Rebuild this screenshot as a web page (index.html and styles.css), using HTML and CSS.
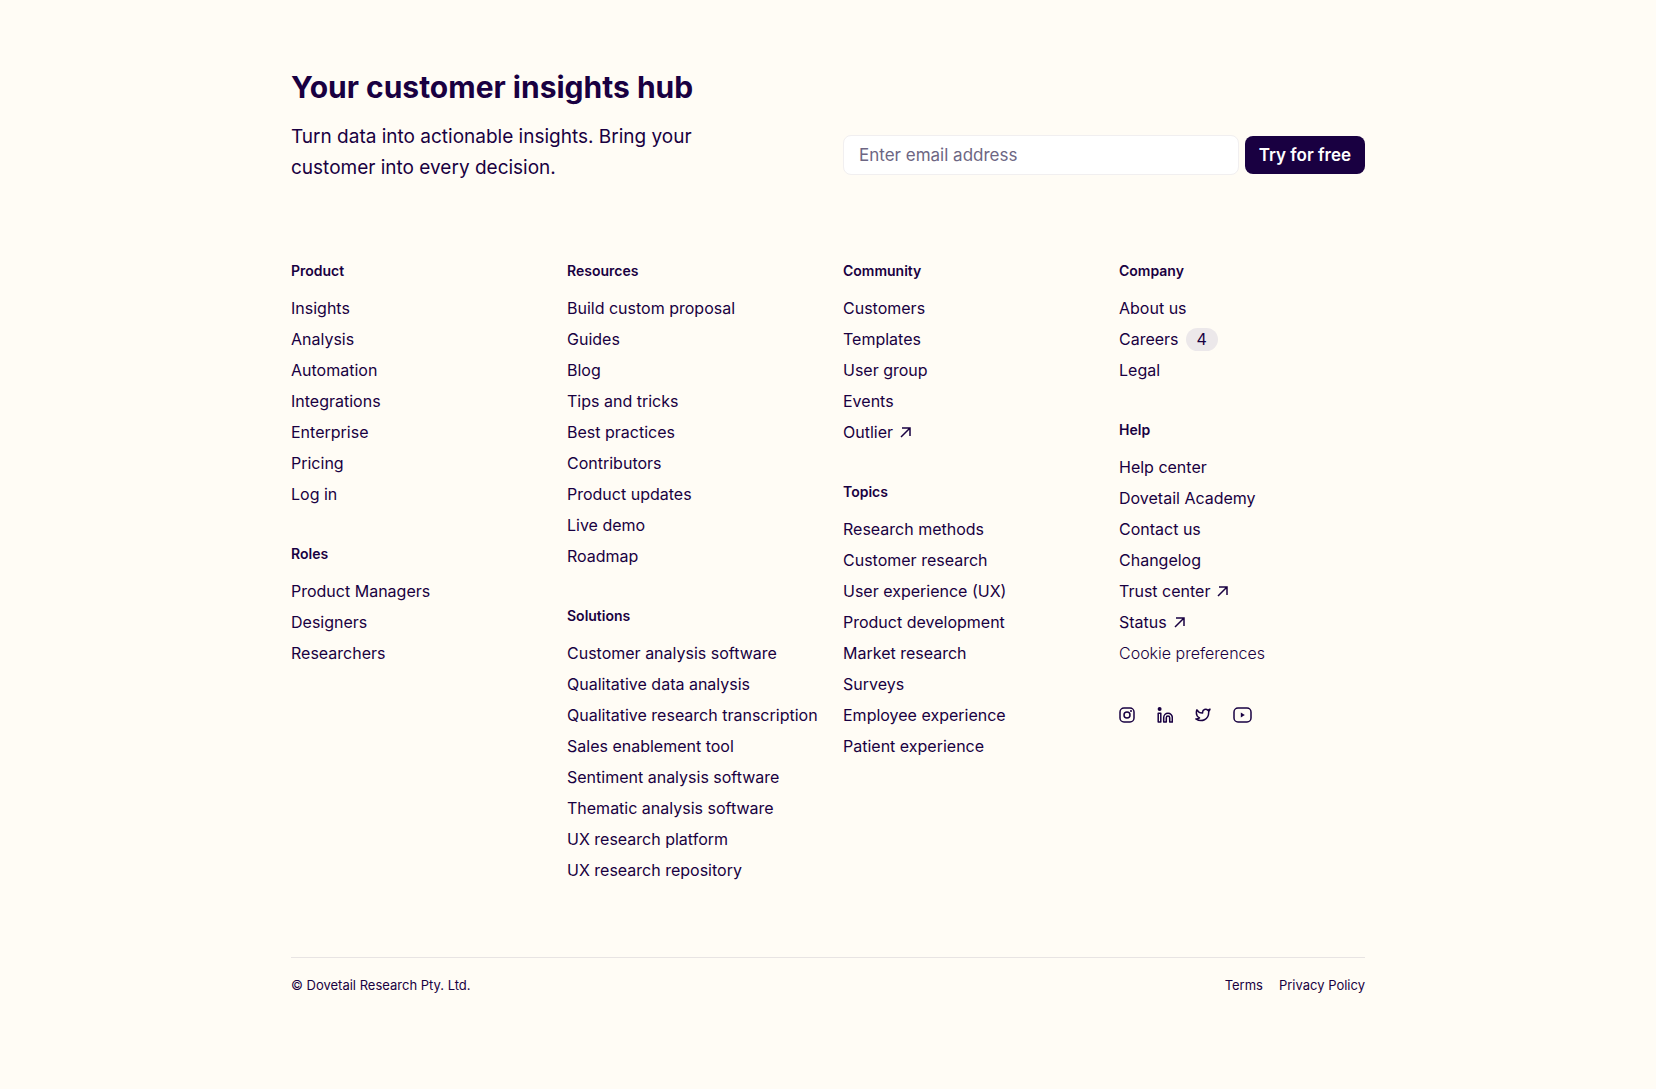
FILE: index.html
```
<!DOCTYPE html>
<html lang="en">

<head>
  <meta charset="UTF-8">
  <meta name="viewport" content="width=device-width, initial-scale=1.0">
  <title>Dovetail</title>
  <link rel="stylesheet" href="styles.css">
</head>

<body>
  <footer class="footer">
    <div class="signup">
      <div class="intro">
        <h2>Your customer insights hub</h2>
        <p>Turn data into actionable insights. Bring your customer into every decision.</p>
      </div>
      <form class="signup-form">
        <input type="email" name="email" placeholder="Enter email address" aria-label="Email address">
        <button type="submit">Try for free</button>
      </form>
    </div>

    <nav class="columns">
      <div class="column">
        <section>
          <h3>Product</h3>
          <ul>
            <li><a href="#">Insights</a></li>
            <li><a href="#">Analysis</a></li>
            <li><a href="#">Automation</a></li>
            <li><a href="#">Integrations</a></li>
            <li><a href="#">Enterprise</a></li>
            <li><a href="#">Pricing</a></li>
            <li><a href="#">Log in</a></li>
          </ul>
        </section>
        <section>
          <h3>Roles</h3>
          <ul>
            <li><a href="#">Product Managers</a></li>
            <li><a href="#">Designers</a></li>
            <li><a href="#">Researchers</a></li>
          </ul>
        </section>
      </div>

      <div class="column">
        <section>
          <h3>Resources</h3>
          <ul>
            <li><a href="#">Build custom proposal</a></li>
            <li><a href="#">Guides</a></li>
            <li><a href="#">Blog</a></li>
            <li><a href="#">Tips and tricks</a></li>
            <li><a href="#">Best practices</a></li>
            <li><a href="#">Contributors</a></li>
            <li><a href="#">Product updates</a></li>
            <li><a href="#">Live demo</a></li>
            <li><a href="#">Roadmap</a></li>
          </ul>
        </section>
        <section>
          <h3>Solutions</h3>
          <ul>
            <li><a href="#">Customer analysis software</a></li>
            <li><a href="#">Qualitative data analysis</a></li>
            <li><a href="#">Qualitative research transcription</a></li>
            <li><a href="#">Sales enablement tool</a></li>
            <li><a href="#">Sentiment analysis software</a></li>
            <li><a href="#">Thematic analysis software</a></li>
            <li><a href="#">UX research platform</a></li>
            <li><a href="#">UX research repository</a></li>
          </ul>
        </section>
      </div>

      <div class="column">
        <section>
          <h3>Community</h3>
          <ul>
            <li><a href="#">Customers</a></li>
            <li><a href="#">Templates</a></li>
            <li><a href="#">User group</a></li>
            <li><a href="#">Events</a></li>
            <li><a href="#">Outlier <svg class="arrow" viewBox="0 0 11 11"><path d="M1 10L10 1M2 1h8v8" /></svg></a></li>
          </ul>
        </section>
        <section>
          <h3>Topics</h3>
          <ul>
            <li><a href="#">Research methods</a></li>
            <li><a href="#">Customer research</a></li>
            <li><a href="#">User experience (UX)</a></li>
            <li><a href="#">Product development</a></li>
            <li><a href="#">Market research</a></li>
            <li><a href="#">Surveys</a></li>
            <li><a href="#">Employee experience</a></li>
            <li><a href="#">Patient experience</a></li>
          </ul>
        </section>
      </div>

      <div class="column">
        <section>
          <h3>Company</h3>
          <ul>
            <li><a href="#">About us</a></li>
            <li><a href="#">Careers <span class="badge">4</span></a></li>
            <li><a href="#">Legal</a></li>
          </ul>
        </section>
        <section>
          <h3>Help</h3>
          <ul>
            <li><a href="#">Help center</a></li>
            <li><a href="#">Dovetail Academy</a></li>
            <li><a href="#">Contact us</a></li>
            <li><a href="#">Changelog</a></li>
            <li><a href="#">Trust center <svg class="arrow" viewBox="0 0 11 11"><path d="M1 10L10 1M2 1h8v8" /></svg></a></li>
            <li><a href="#">Status <svg class="arrow" viewBox="0 0 11 11"><path d="M1 10L10 1M2 1h8v8" /></svg></a></li>
            <li><button type="button" class="cookie">Cookie preferences</button></li>
          </ul>
        </section>
        <div class="social">
          <a href="#" aria-label="Instagram">
            <svg width="16" height="16" viewBox="0 0 16 16">
              <rect x="1" y="1" width="14" height="14" rx="4" />
              <circle cx="8" cy="8" r="3" />
              <circle class="solid" cx="12" cy="4" r="1" />
            </svg>
          </a>
          <a href="#" aria-label="LinkedIn">
            <svg width="16" height="16" viewBox="0 0 16 16">
              <circle class="solid" cx="2.6" cy="2" r="2" />
              <path d="M1.2 6.2h2.6v8.9H1.2z" />
              <path d="M6.7 15.1v-4.6a4.3 4.3 0 0 1 8.6 0v4.6h-2.6v-4.4a1.7 1.7 0 0 0-3.4 0v4.4z" />
            </svg>
          </a>
          <a href="#" aria-label="Twitter">
            <svg width="16" height="16" viewBox="0 0 16 16">
              <path d="M15 2.2c-.7.5-1.4.8-2.2 1a3 3 0 0 0-5.2 2v.8C5.2 6.1 3.2 5 1.9 2.8c0 0-2.3 5.6 2.6 8-1.1.8-2.4 1.2-3.7 1.1 6 3.9 12.9.5 12.9-6.7 0-.2 0-.4-.1-.6.7-.7 1.2-1.500 1.400-2.400z" />
            </svg>
          </a>
          <a href="#" aria-label="YouTube">
            <svg width="19" height="16" viewBox="0 0 19 16">
              <rect x="1" y="1" width="17" height="14" rx="4" />
              <path class="solid" d="M7.8 5.6v4.8L11.8 8z" />
            </svg>
          </a>
        </div>
      </div>
    </nav>

    <div class="bottom">
      <span>© Dovetail Research Pty. Ltd.</span>
      <div class="legal">
        <a href="#">Terms</a>
        <a href="#">Privacy Policy</a>
      </div>
    </div>
  </footer>
</body>

</html>
```
FILE: styles.css
```
* {
  box-sizing: border-box;
}

body {
  margin: 0;
  background-color: #fffcf5;
  color: #190041;
  font-family: Inter, "Liberation Sans", sans-serif;
  font-size: 16px;
}

h2,
h3,
p,
ul {
  margin: 0;
  padding: 0;
}

a {
  color: inherit;
  text-decoration: none;
}

a:hover {
  text-decoration: underline;
}

.footer {
  max-width: 1114px;
  margin: 0 auto;
  padding: 67px 20px;
}

/* Heading and email form */
.signup {
  display: grid;
  grid-template-columns: 1fr 1fr;
  gap: 30px;
  align-items: end;
  margin-bottom: 78px;
}

.intro h2 {
  margin-bottom: 14px;
  font-size: 30px;
  line-height: 40px;
  font-weight: 700;
}

.intro p {
  max-width: 440px;
  font-size: 19px;
  line-height: 31px;
}

.signup-form {
  display: flex;
  align-items: center;
  gap: 6px;
  margin-bottom: 8px;
}

.signup-form input {
  flex: 1;
  min-width: 0;
  height: 40px;
  padding: 0 15px;
  border: 1px solid #f1eff0;
  border-radius: 8px;
  background-color: #fff;
  color: inherit;
  font-family: inherit;
  font-size: 17px;
}

.signup-form input::placeholder {
  color: #6d6683;
  opacity: 1;
}

.signup-form button {
  height: 38px;
  padding: 0 14px;
  border: none;
  border-radius: 8px;
  background-color: #190041;
  color: #fff;
  font-family: inherit;
  font-size: 17px;
  font-weight: 600;
  cursor: pointer;
}

/* Link columns */
.columns {
  display: grid;
  grid-template-columns: repeat(4, minmax(0, 1fr));
  gap: 30px;
}

.column {
  display: flex;
  flex-direction: column;
  gap: 34px;
  white-space: nowrap;
}

.column h3 {
  margin-bottom: 12px;
  font-size: 14px;
  line-height: 20px;
  font-weight: 600;
}

.column ul {
  list-style: none;
}

.column li {
  line-height: 31px;
}

.column li a {
  display: flex;
  align-items: center;
  gap: 7px;
}

.arrow {
  width: 11px;
  height: 11px;
}

.arrow path,
.social svg {
  fill: none;
  stroke: currentColor;
  stroke-width: 1.5;
}

.badge {
  padding: 0 11px;
  border-radius: 12px;
  background-color: #ece8ea;
  line-height: 23px;
}

.cookie {
  padding: 0;
  border: none;
  background: none;
  color: inherit;
  font-family: inherit;
  font-size: 16px;
  font-weight: 300;
  line-height: 31px;
  cursor: pointer;
}

.social {
  display: flex;
  align-items: center;
  gap: 22px;
  padding-top: 4px;
}

.social svg {
  display: block;
  stroke-linejoin: round;
}

.social .solid {
  fill: currentColor;
  stroke: none;
}

/* Copyright bar */
.bottom {
  display: flex;
  justify-content: space-between;
  margin-top: 71px;
  padding-top: 17px;
  border-top: 1px solid #e8e4e3;
  font-size: 13px;
  line-height: 20px;
}

.legal {
  display: flex;
  gap: 16px;
}
```
